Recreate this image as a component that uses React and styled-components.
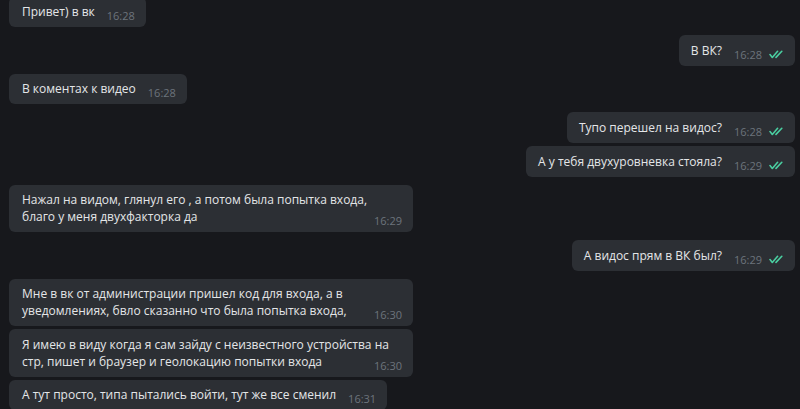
import styled, { createGlobalStyle } from "styled-components";

const GlobalStyle = createGlobalStyle`
  html, body {
    margin: 0;
    background: #17181c;
  }
  body {
    font-family: "Open Sans", "Noto Sans", sans-serif;
  }
`;

const Chat = styled.div`
  display: flex;
  flex-direction: column;
  align-items: flex-start;
  box-sizing: border-box;
  height: 409px;
  padding: 0 5px 0 9px;
  overflow: hidden;
  background: #17181c;
`;

const Bubble = styled.div`
  align-self: ${(p) => (p.$out ? "flex-end" : "flex-start")};
  margin-top: ${(p) => p.$gap}px;
  max-width: 404px;
  box-sizing: border-box;
  padding: ${(p) => (p.$out ? "6.5px 12px 7px 12px" : "6.5px 14px 7px 13px")};
  background: #2c2f34;
  border-radius: 6px;
  color: #e4e6e8;
  font-size: 12px;
  line-height: 17px;
  flex-shrink: 0;
`;

const Meta = styled.span`
  float: right;
  display: flex;
  align-items: center;
  gap: 7px;
  margin: 6px ${(p) => (p.$out ? "0" : "-3px")} -4px 12px;
  font-size: 11px;
  line-height: 14px;
  color: #6c747c;
`;

const Check = () => (
  <svg width="14" height="9" viewBox="0 0 14 9" fill="none">
    <path
      d="M1 4.6 L3.3 7.4 L8.6 1.3 M7 7.4 L12.8 1.3"
      stroke="#4acfa1"
      strokeWidth="1.6"
      strokeLinecap="round"
      strokeLinejoin="round"
    />
  </svg>
);

const messages = [
  { text: "Привет) в вк", time: "16:28", gap: -3.5 },
  { text: "В ВК?", time: "16:28", out: true, gap: 8 },
  { text: "В коментах к видео", time: "16:28", gap: 8 },
  { text: "Тупо перешел на видос?", time: "16:28", out: true, gap: 8 },
  { text: "А у тебя двухуровневка стояла?", time: "16:29", out: true, gap: 3.5 },
  {
    text: "Нажал на видом, глянул его , а потом была попытка входа, благо у меня двухфакторка да",
    time: "16:29",
    gap: 8,
  },
  { text: "А видос прям в ВК был?", time: "16:29", out: true, gap: 8 },
  {
    text: "Мне в вк от администрации пришел код для входа, а в уведомлениях, бвло сказанно что была попытка входа,",
    time: "16:30",
    gap: 8,
  },
  {
    text: "Я имею в виду когда я сам зайду с неизвестного устройства на стр, пишет и браузер и геолокацию попытки входа",
    time: "16:30",
    gap: 3,
  },
  { text: "А тут просто, типа пытались войти, тут же все сменил", time: "16:31", gap: 3 },
];

export default function App() {
  return (
    <>
      <GlobalStyle />
      <Chat>
        {messages.map((m, i) => (
          <Bubble key={i} $out={m.out} $gap={m.gap}>
            {m.text}
            <Meta $out={m.out}>
              {m.time}
              {m.out && <Check />}
            </Meta>
          </Bubble>
        ))}
      </Chat>
    </>
  );
}
